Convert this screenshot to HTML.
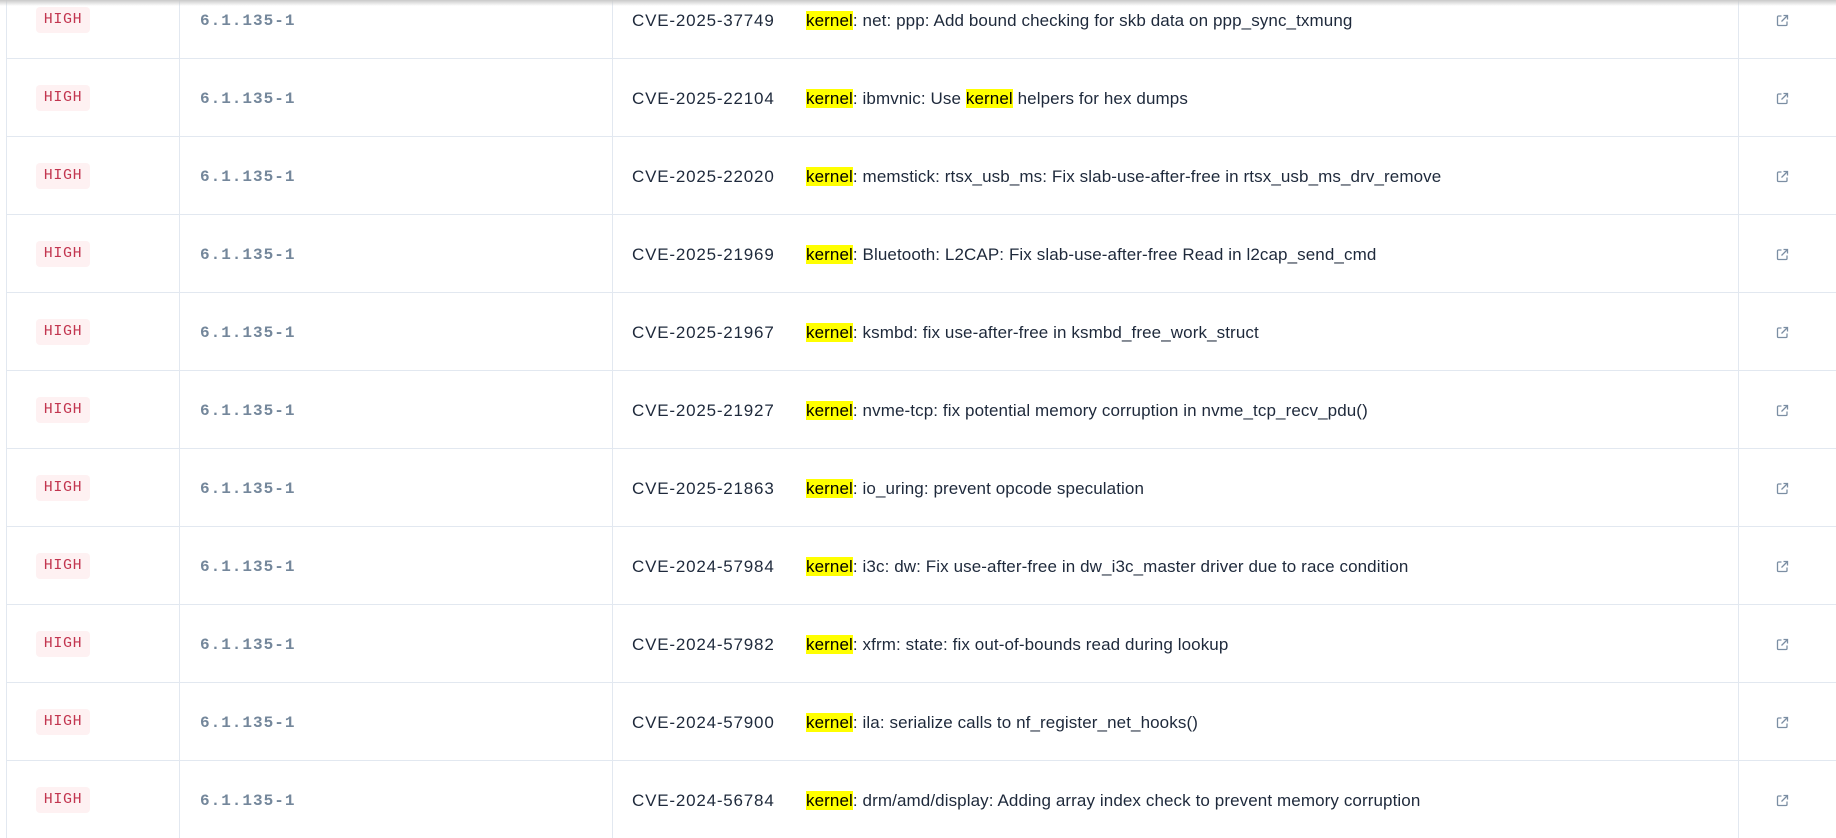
<!DOCTYPE html>
<html><head><meta charset="utf-8"><style>
html,body{margin:0;padding:0;width:1836px;height:838px;overflow:hidden;background:#fff;}
body{position:relative;font-family:"Liberation Sans",sans-serif;}
.vl{position:absolute;top:0;height:838px;width:1px;background:#e2e8f0;}
.hl{position:absolute;left:6px;width:1830px;height:1px;background:#e2e8f0;}
.row{position:absolute;left:0;width:1836px;height:78px;}
.badge{position:absolute;left:36px;top:26px;width:54px;height:26px;border-radius:4px;background:#fef1f2;color:#c2354f;font-family:"Liberation Mono",monospace;font-size:15px;letter-spacing:0.6px;line-height:26px;text-align:center;}
.ver{position:absolute;left:200px;top:29px;font-family:"Liberation Mono",monospace;font-size:16px;letter-spacing:1px;color:#74879b;line-height:22px;font-weight:bold;}
.cve{position:absolute;left:632px;top:29px;font-size:17px;letter-spacing:0.8px;color:#1e293b;line-height:22px;}
.desc{position:absolute;left:806px;top:29px;font-size:17px;letter-spacing:0.1px;color:#1e293b;line-height:22px;white-space:nowrap;}
mark{background:#ffff00;color:#000;padding:0;}
.ic{position:absolute;left:1776px;top:33px;}
.shadow{position:absolute;left:0;top:0;width:1836px;height:6px;background:linear-gradient(#c8c8c8,rgba(255,255,255,0));}
</style></head><body>
<div class="vl" style="left:6px"></div>
<div class="vl" style="left:179px"></div>
<div class="vl" style="left:612px"></div>
<div class="vl" style="left:1738px"></div>
<div class="hl" style="top:58px"></div>
<div class="hl" style="top:136px"></div>
<div class="hl" style="top:214px"></div>
<div class="hl" style="top:292px"></div>
<div class="hl" style="top:370px"></div>
<div class="hl" style="top:448px"></div>
<div class="hl" style="top:526px"></div>
<div class="hl" style="top:604px"></div>
<div class="hl" style="top:682px"></div>
<div class="hl" style="top:760px"></div>

<div class="row" style="top:-19px"><div class="badge">HIGH</div><div class="ver">6.1.135-1</div><div class="cve">CVE-2025-37749</div><div class="desc"><mark>kernel</mark>: net: ppp: Add bound checking for skb data on ppp_sync_txmung</div><svg class="ic" width="13" height="13" viewBox="0 0 13 13" fill="none" stroke="#7b8ea3" stroke-width="1.3"><path d="M5.5 2H2.5a1 1 0 0 0-1 1v7.5a1 1 0 0 0 1 1H10a1 1 0 0 0 1-1V7.5"/><path d="M7.5 1.5h4v4M11.5 1.5L5.5 7.5"/></svg></div>
<div class="row" style="top:59px"><div class="badge">HIGH</div><div class="ver">6.1.135-1</div><div class="cve">CVE-2025-22104</div><div class="desc"><mark>kernel</mark>: ibmvnic: Use <mark>kernel</mark> helpers for hex dumps</div><svg class="ic" width="13" height="13" viewBox="0 0 13 13" fill="none" stroke="#7b8ea3" stroke-width="1.3"><path d="M5.5 2H2.5a1 1 0 0 0-1 1v7.5a1 1 0 0 0 1 1H10a1 1 0 0 0 1-1V7.5"/><path d="M7.5 1.5h4v4M11.5 1.5L5.5 7.5"/></svg></div>
<div class="row" style="top:137px"><div class="badge">HIGH</div><div class="ver">6.1.135-1</div><div class="cve">CVE-2025-22020</div><div class="desc"><mark>kernel</mark>: memstick: rtsx_usb_ms: Fix slab-use-after-free in rtsx_usb_ms_drv_remove</div><svg class="ic" width="13" height="13" viewBox="0 0 13 13" fill="none" stroke="#7b8ea3" stroke-width="1.3"><path d="M5.5 2H2.5a1 1 0 0 0-1 1v7.5a1 1 0 0 0 1 1H10a1 1 0 0 0 1-1V7.5"/><path d="M7.5 1.5h4v4M11.5 1.5L5.5 7.5"/></svg></div>
<div class="row" style="top:215px"><div class="badge">HIGH</div><div class="ver">6.1.135-1</div><div class="cve">CVE-2025-21969</div><div class="desc"><mark>kernel</mark>: Bluetooth: L2CAP: Fix slab-use-after-free Read in l2cap_send_cmd</div><svg class="ic" width="13" height="13" viewBox="0 0 13 13" fill="none" stroke="#7b8ea3" stroke-width="1.3"><path d="M5.5 2H2.5a1 1 0 0 0-1 1v7.5a1 1 0 0 0 1 1H10a1 1 0 0 0 1-1V7.5"/><path d="M7.5 1.5h4v4M11.5 1.5L5.5 7.5"/></svg></div>
<div class="row" style="top:293px"><div class="badge">HIGH</div><div class="ver">6.1.135-1</div><div class="cve">CVE-2025-21967</div><div class="desc"><mark>kernel</mark>: ksmbd: fix use-after-free in ksmbd_free_work_struct</div><svg class="ic" width="13" height="13" viewBox="0 0 13 13" fill="none" stroke="#7b8ea3" stroke-width="1.3"><path d="M5.5 2H2.5a1 1 0 0 0-1 1v7.5a1 1 0 0 0 1 1H10a1 1 0 0 0 1-1V7.5"/><path d="M7.5 1.5h4v4M11.5 1.5L5.5 7.5"/></svg></div>
<div class="row" style="top:371px"><div class="badge">HIGH</div><div class="ver">6.1.135-1</div><div class="cve">CVE-2025-21927</div><div class="desc"><mark>kernel</mark>: nvme-tcp: fix potential memory corruption in nvme_tcp_recv_pdu()</div><svg class="ic" width="13" height="13" viewBox="0 0 13 13" fill="none" stroke="#7b8ea3" stroke-width="1.3"><path d="M5.5 2H2.5a1 1 0 0 0-1 1v7.5a1 1 0 0 0 1 1H10a1 1 0 0 0 1-1V7.5"/><path d="M7.5 1.5h4v4M11.5 1.5L5.5 7.5"/></svg></div>
<div class="row" style="top:449px"><div class="badge">HIGH</div><div class="ver">6.1.135-1</div><div class="cve">CVE-2025-21863</div><div class="desc"><mark>kernel</mark>: io_uring: prevent opcode speculation</div><svg class="ic" width="13" height="13" viewBox="0 0 13 13" fill="none" stroke="#7b8ea3" stroke-width="1.3"><path d="M5.5 2H2.5a1 1 0 0 0-1 1v7.5a1 1 0 0 0 1 1H10a1 1 0 0 0 1-1V7.5"/><path d="M7.5 1.5h4v4M11.5 1.5L5.5 7.5"/></svg></div>
<div class="row" style="top:527px"><div class="badge">HIGH</div><div class="ver">6.1.135-1</div><div class="cve">CVE-2024-57984</div><div class="desc"><mark>kernel</mark>: i3c: dw: Fix use-after-free in dw_i3c_master driver due to race condition</div><svg class="ic" width="13" height="13" viewBox="0 0 13 13" fill="none" stroke="#7b8ea3" stroke-width="1.3"><path d="M5.5 2H2.5a1 1 0 0 0-1 1v7.5a1 1 0 0 0 1 1H10a1 1 0 0 0 1-1V7.5"/><path d="M7.5 1.5h4v4M11.5 1.5L5.5 7.5"/></svg></div>
<div class="row" style="top:605px"><div class="badge">HIGH</div><div class="ver">6.1.135-1</div><div class="cve">CVE-2024-57982</div><div class="desc"><mark>kernel</mark>: xfrm: state: fix out-of-bounds read during lookup</div><svg class="ic" width="13" height="13" viewBox="0 0 13 13" fill="none" stroke="#7b8ea3" stroke-width="1.3"><path d="M5.5 2H2.5a1 1 0 0 0-1 1v7.5a1 1 0 0 0 1 1H10a1 1 0 0 0 1-1V7.5"/><path d="M7.5 1.5h4v4M11.5 1.5L5.5 7.5"/></svg></div>
<div class="row" style="top:683px"><div class="badge">HIGH</div><div class="ver">6.1.135-1</div><div class="cve">CVE-2024-57900</div><div class="desc"><mark>kernel</mark>: ila: serialize calls to nf_register_net_hooks()</div><svg class="ic" width="13" height="13" viewBox="0 0 13 13" fill="none" stroke="#7b8ea3" stroke-width="1.3"><path d="M5.5 2H2.5a1 1 0 0 0-1 1v7.5a1 1 0 0 0 1 1H10a1 1 0 0 0 1-1V7.5"/><path d="M7.5 1.5h4v4M11.5 1.5L5.5 7.5"/></svg></div>
<div class="row" style="top:761px"><div class="badge">HIGH</div><div class="ver">6.1.135-1</div><div class="cve">CVE-2024-56784</div><div class="desc"><mark>kernel</mark>: drm/amd/display: Adding array index check to prevent memory corruption</div><svg class="ic" width="13" height="13" viewBox="0 0 13 13" fill="none" stroke="#7b8ea3" stroke-width="1.3"><path d="M5.5 2H2.5a1 1 0 0 0-1 1v7.5a1 1 0 0 0 1 1H10a1 1 0 0 0 1-1V7.5"/><path d="M7.5 1.5h4v4M11.5 1.5L5.5 7.5"/></svg></div>
<div class="shadow"></div>
</body></html>
